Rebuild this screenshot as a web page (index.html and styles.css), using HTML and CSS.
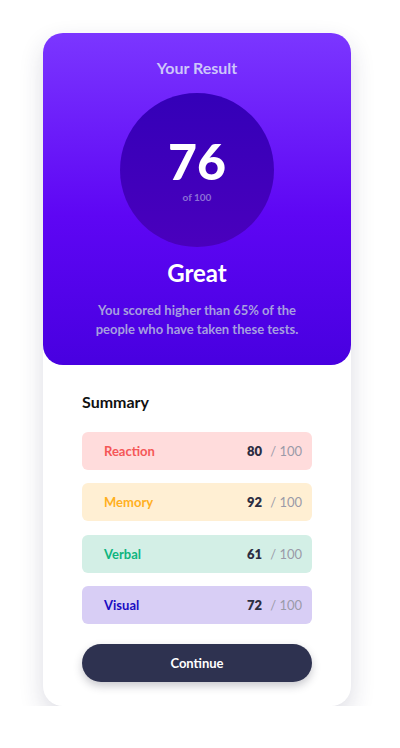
FILE: index.html
```html
<!DOCTYPE html>
<html lang="en">
<head>
<meta charset="utf-8">
<title>Results summary</title>
<link rel="stylesheet" href="styles.css">
</head>
<body>
<main class="card">
  <section class="result">
    <h1 class="result-title">Your Result</h1>
    <div class="circle">
      <span class="score">76</span>
      <span class="of">of 100</span>
    </div>
    <h2 class="grade">Great</h2>
    <p class="desc">You scored higher than 65% of the people who have taken these tests.</p>
  </section>
  <section class="summary">
    <h2 class="summary-title">Summary</h2>
    <ul class="items">
      <li class="item reaction"><span class="label">Reaction</span><span class="val"><b>80</b><span class="max">/ 100</span></span></li>
      <li class="item memory"><span class="label">Memory</span><span class="val"><b>92</b><span class="max">/ 100</span></span></li>
      <li class="item verbal"><span class="label">Verbal</span><span class="val"><b>61</b><span class="max">/ 100</span></span></li>
      <li class="item visual"><span class="label">Visual</span><span class="val"><b>72</b><span class="max">/ 100</span></span></li>
    </ul>
    <button class="btn">Continue</button>
  </section>
</main>
</body>
</html>
```
FILE: styles.css
```css
* { box-sizing: border-box; }
body {
  margin: 0;
  background: #ffffff;
  font-family: "Lato", "Inter", sans-serif;
}
.card {
  width: 308px;
  margin: 33px 0 0 43px;
  background: #fff;
  border-radius: 20px;
  box-shadow: 0 10px 24px rgba(40, 40, 80, 0.16);
}
.result {
  height: 332px;
  border-radius: 20px;
  background: linear-gradient(180deg, #7b36ff 0%, #5e06f4 55%, #4800e0 100%);
  display: flex;
  flex-direction: column;
  align-items: center;
  padding-top: 25px;
  text-align: center;
}
.result-title {
  margin: 0;
  font-size: 16px;
  line-height: 20px;
  font-weight: 700;
  color: #cdc6fa;
}
.circle {
  margin-top: 15px;
  width: 154px;
  height: 154px;
  border-radius: 50%;
  background: linear-gradient(180deg, #3400b8 0%, #4a00bd 100%);
  display: flex;
  flex-direction: column;
  align-items: center;
  justify-content: center;
  padding-bottom: 2px;
}
.score {
  font-size: 50px;
  line-height: 52px;
  font-weight: 900;
  color: #fff;
}
.of {
  margin-top: 4px;
  font-size: 10px;
  font-weight: 700;
  color: #8b6fd6;
}
.grade {
  margin: 12px 0 0;
  font-size: 24px;
  line-height: 28px;
  font-weight: 700;
  color: #fff;
}
.desc {
  margin: 14px 0 0;
  width: 228px;
  font-size: 13px;
  line-height: 19px;
  font-weight: 700;
  color: #a69fdf;
}
.summary {
  padding: 27px 39px 24px;
}
.summary-title {
  margin: 0;
  font-size: 16px;
  line-height: 20px;
  font-weight: 700;
  color: #111;
}
.items {
  list-style: none;
  margin: 20px 0 0;
  padding: 0;
  display: flex;
  flex-direction: column;
  gap: 13.3px;
}
.item {
  height: 38px;
  border-radius: 6px;
  display: flex;
  align-items: center;
  justify-content: space-between;
  padding: 0 10px 0 22px;
  font-size: 13px;
  font-weight: 700;
}
.val { display: flex; gap: 8px; }
.val b { color: #2b2d42; font-weight: 800; }
.max { color: #9a9aa8; font-weight: 400; }
.reaction { background: #ffdcdc; color: #f55757; }
.memory { background: #ffefd3; color: #ffb01f; }
.verbal { background: #d3efe6; color: #0fb57e; }
.visual { background: #d8cef5; color: #1a0bc2; }
.btn {
  margin-top: 20px;
  width: 100%;
  height: 38px;
  border: none;
  border-radius: 19px;
  background: #2e3250;
  color: #fff;
  font-family: inherit;
  font-size: 13px;
  font-weight: 700;
  box-shadow: 0 4px 8px rgba(40, 40, 60, 0.25);
}
```
